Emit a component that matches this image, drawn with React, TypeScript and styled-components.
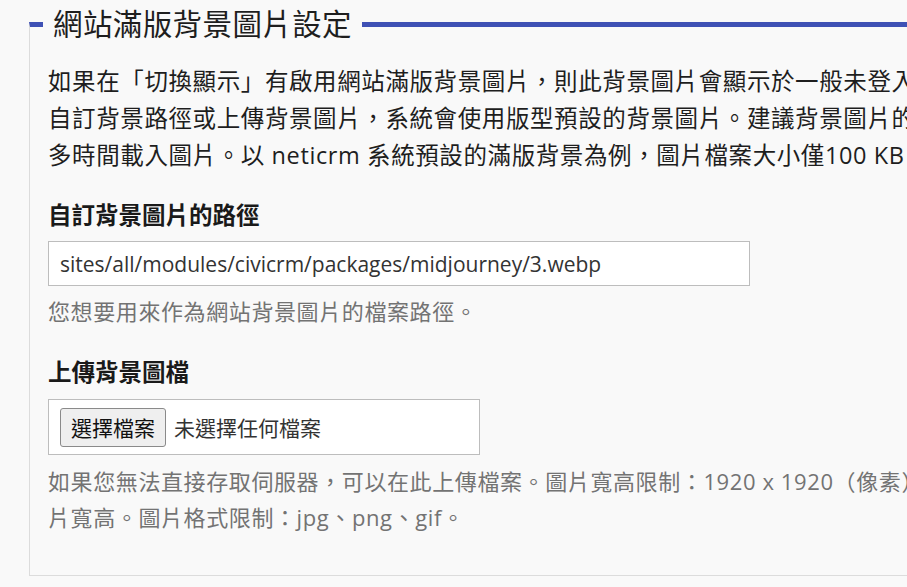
import React from "react";
import styled, { createGlobalStyle } from "styled-components";

const Global = createGlobalStyle`
  html, body {
    margin: 0;
    padding: 0;
    background: #f9f9f9;
    overflow: hidden;
  }
  body {
    font-family: "Open Sans", "Noto Sans CJK TC", sans-serif;
    color: #222;
  }
`;

const Page = styled.div`
  padding: 6px 0 0 29px;
  width: 1400px;
`;

const Fieldset = styled.fieldset`
  margin: 0;
  padding: 0;
  min-width: 0;
  border: 1px solid #dcdcdc;
  border-top: 5px solid #3f51b5;
  background: #f9f9f9;
`;

const Legend = styled.legend`
  margin-left: 13px;
  padding: 0 10px;
  font-size: 29.5px;
  line-height: 36px;
  font-weight: 400;
  letter-spacing: 0.4px;
  color: #1e1e1e;
`;

const Body = styled.div`
  padding: 21px 19px 40px 18px;
`;

const Description = styled.p`
  margin: 0;
  font-size: 23.5px;
  line-height: 37px;
  letter-spacing: 0.6px;
  color: #1e1e1e;
`;

const Line = styled.span`
  display: block;
  white-space: nowrap;
`;

const Label = styled.div<{ $gap: number }>`
  margin-top: ${(p) => p.$gap}px;
  font-size: 23.5px;
  line-height: 38px;
  font-weight: 700;
  color: #1a1a1a;
`;

const TextInput = styled.input`
  display: block;
  box-sizing: border-box;
  margin-top: 7px;
  width: 702px;
  height: 45px;
  padding: 0 11px;
  border: 1px solid #bdbdbd;
  border-radius: 0;
  background: #fff;
  font-family: "Open Sans", "Noto Sans CJK TC", sans-serif;
  font-size: 21px;
  color: #333;
  outline: none;
`;

const Help = styled.div<{ $gap: number }>`
  margin-top: ${(p) => p.$gap}px;
  font-size: 22px;
  line-height: 36px;
  letter-spacing: 0.6px;
  color: #737373;
`;

const FileBox = styled.div`
  box-sizing: border-box;
  margin-top: 8px;
  width: 432px;
  height: 56px;
  padding: 0 11px;
  display: flex;
  align-items: center;
  gap: 8px;
  background: #fff;
  border: 1px solid #bdbdbd;
`;

const FileButton = styled.button`
  box-sizing: border-box;
  height: 39px;
  padding: 0 10px;
  background: #efefef;
  border: 1px solid #8a8a8a;
  border-radius: 3px;
  font-family: "Open Sans", "Noto Sans CJK TC", sans-serif;
  font-size: 21px;
  color: #111;
`;

const FileName = styled.span`
  font-size: 21px;
  color: #333;
  white-space: nowrap;
`;

export default function App() {
  return (
    <>
      <Global />
      <Page>
        <Fieldset>
          <Legend>網站滿版背景圖片設定</Legend>
          <Body>
            <Description>
              <Line>如果在「切換顯示」有啟用網站滿版背景圖片，則此背景圖片會顯示於一般未登入使用者所看到的頁面。若您未</Line>
              <Line>自訂背景路徑或上傳背景圖片，系統會使用版型預設的背景圖片。建議背景圖片的檔案不要太大，以免訪客需要花費較</Line>
              <Line>多時間載入圖片。以 neticrm 系統預設的滿版背景為例，圖片檔案大小僅100 KB。</Line>
            </Description>

            <Label $gap={22}>自訂背景圖片的路徑</Label>
            <TextInput type="text" defaultValue="sites/all/modules/civicrm/packages/midjourney/3.webp" />
            <Help $gap={7}>您想要用來作為網站背景圖片的檔案路徑。</Help>

            <Label $gap={24}>上傳背景圖檔</Label>
            <FileBox>
              <FileButton type="button">選擇檔案</FileButton>
              <FileName>未選擇任何檔案</FileName>
            </FileBox>
            <Help $gap={8}>
              <Line>如果您無法直接存取伺服器，可以在此上傳檔案。圖片寬高限制：1920 x 1920（像素），超過時會自動縮小至限制的圖</Line>
              <Line>片寬高。圖片格式限制：jpg、png、gif。</Line>
            </Help>
          </Body>
        </Fieldset>
      </Page>
    </>
  );
}
